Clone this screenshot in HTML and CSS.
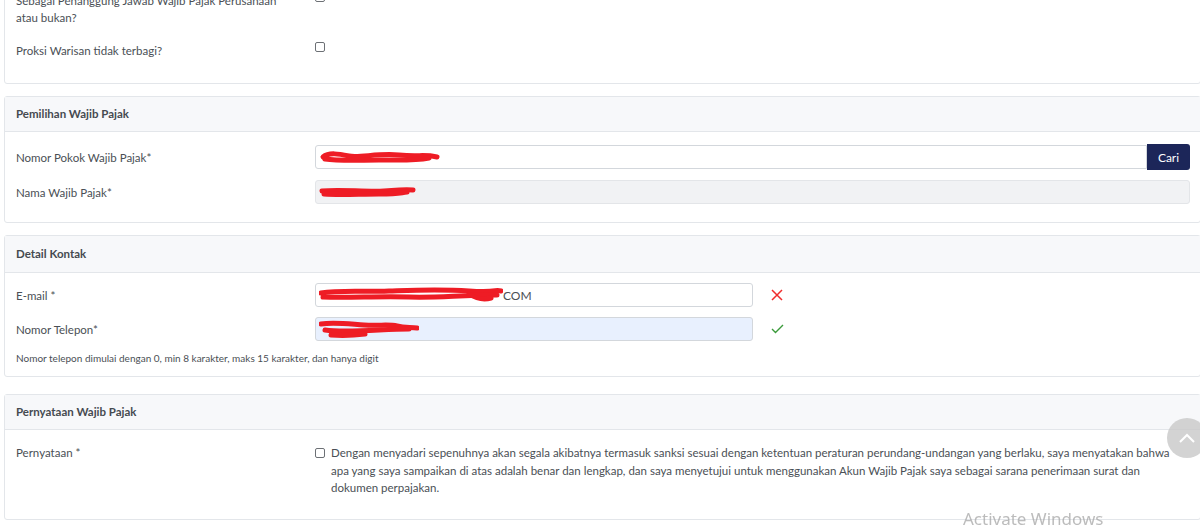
FILE: index.html
```html
<!DOCTYPE html>
<html lang="id">
<head>
  <meta charset="UTF-8">
  <meta name="viewport" content="width=device-width, initial-scale=1.0">
  <title>Registrasi Wajib Pajak</title>
  <link rel="stylesheet" href="styles.css">
</head>
<body>

  <div class="page">

    <!-- Pilihan peran -->
    <div class="card card-top">
      <div class="card-body">
        <div class="form-row row-top">
          <label class="form-label">Sebagai Penanggung Jawab Wajib Pajak Perusahaan atau bukan?</label>
          <div class="form-field"><input type="checkbox" class="check"></div>
        </div>
        <div class="form-row row-top">
          <label class="form-label">Proksi Warisan tidak terbagi?</label>
          <div class="form-field"><input type="checkbox" class="check"></div>
        </div>
      </div>
    </div>

    <!-- Pemilihan Wajib Pajak -->
    <div class="card">
      <div class="card-header">Pemilihan Wajib Pajak</div>
      <div class="card-body">
        <div class="form-row">
          <label class="form-label">Nomor Pokok Wajib Pajak*</label>
          <div class="form-field input-group">
            <div class="form-control">
              <svg class="scribble" width="125" height="18" viewBox="0 0 125 18">
                <path d="M4 9 C10 4, 20 6, 30 8 S60 5, 80 7 S105 6, 118 9" />
                <path d="M6 11 C20 13, 40 12, 60 12 S95 13, 110 10" />
              </svg>
            </div>
            <button class="btn-cari">Cari</button>
          </div>
        </div>
        <div class="form-row">
          <label class="form-label">Nama Wajib Pajak*</label>
          <div class="form-field">
            <div class="form-control disabled">
              <svg class="scribble" width="100" height="18" viewBox="0 0 100 18">
                <path d="M3 8 C20 6, 45 9, 65 8 S85 6, 94 7" />
                <path d="M5 11 C20 12, 40 11, 60 11 S80 10, 88 9" />
              </svg>
            </div>
          </div>
        </div>
      </div>
    </div>

    <!-- Detail Kontak -->
    <div class="card card-kontak">
      <div class="card-header">Detail Kontak</div>
      <div class="card-body">
        <div class="form-row">
          <label class="form-label">E-mail *</label>
          <div class="form-field with-status">
            <div class="form-control short">
              <svg class="scribble" width="184" height="20" viewBox="0 0 184 20">
                <path d="M2 8 C20 5, 40 7, 70 6 S120 4, 150 6 S175 4, 182 6" />
                <path d="M4 12 C30 13, 60 11, 90 12 S140 10, 178 10" />
                <path d="M150 9 C158 14, 165 15, 172 13" />
              </svg><span class="value">COM</span>
            </div>
            <span class="status status-bad">
              <svg width="12" height="12" viewBox="0 0 12 12"><path d="M1 1 L11 11 M11 1 L1 11" /></svg>
            </span>
          </div>
        </div>
        <div class="form-row">
          <label class="form-label">Nomor Telepon*</label>
          <div class="form-field with-status">
            <div class="form-control short autofill">
              <svg class="scribble" width="100" height="22" viewBox="0 0 100 22">
                <path d="M2 6 C15 4, 30 6, 45 7 S70 6, 78 8 S92 9, 98 10" />
                <path d="M6 12 C20 14, 40 13, 60 12 S80 11, 90 11" />
                <path d="M12 17 C25 18, 38 17, 46 16" />
              </svg>
            </div>
            <span class="status status-ok">
              <svg width="13" height="10" viewBox="0 0 13 10"><path d="M1 5 L4.5 8.5 L12 1" /></svg>
            </span>
          </div>
        </div>
        <p class="form-hint">Nomor telepon dimulai dengan 0, min 8 karakter, maks 15 karakter, dan hanya digit</p>
      </div>
    </div>

    <!-- Pernyataan -->
    <div class="card card-statement">
      <div class="card-header">Pernyataan Wajib Pajak</div>
      <div class="card-body">
        <div class="form-row row-top">
          <label class="form-label">Pernyataan *</label>
          <div class="form-field statement">
            <input type="checkbox" class="check">
            <p>Dengan menyadari sepenuhnya akan segala akibatnya termasuk sanksi sesuai dengan ketentuan peraturan perundang-undangan yang berlaku, saya menyatakan bahwa apa yang saya sampaikan di atas adalah benar dan lengkap, dan saya menyetujui untuk menggunakan Akun Wajib Pajak saya sebagai sarana penerimaan surat dan dokumen perpajakan.</p>
          </div>
        </div>
      </div>
    </div>

  </div>

  <button class="scroll-top">
    <svg width="16" height="10" viewBox="0 0 16 10"><path d="M1 9 L8 2 L15 9" /></svg>
  </button>

  <div class="watermark">Activate Windows</div>

</body>
</html>
```

FILE: styles.css
```css
body {
  font-family: Lato, "Noto Sans", sans-serif;
  font-size: 11.5px;
  color: #4a4f55;
  background-color: #fff;
  margin: 0;
  padding: 0;
  overflow: hidden;
}

.page {
  width: 1197px;
  margin-top: -25px;
  padding-left: 4px;
}

.card {
  border: 1px solid #e3e6ea;
  border-radius: 3px;
  background-color: #fff;
  margin-bottom: 12px;
}

.card-kontak {
  margin-bottom: 17px;
}

.card-header {
  background-color: #f7f8fa;
  border-bottom: 1px solid #e3e6ea;
  height: 34px;
  line-height: 34px;
  padding: 0 11px;
  font-weight: 700;
  color: #454a50;
}

.card-kontak .card-header {
  height: 36px;
  line-height: 36px;
}

.card-body {
  padding: 12px 10px 18px 11px;
  display: flex;
  flex-direction: column;
  gap: 10px;
}

.card-kontak .card-body {
  padding-top: 10px;
  padding-bottom: 11px;
}

.card-statement .card-body {
  padding-top: 14px;
  padding-bottom: 22px;
}

.card-top .card-body {
  padding-top: 16px;
  padding-bottom: 24px;
  gap: 16px;
}

.form-row {
  display: grid;
  grid-template-columns: 286px 1fr;
  column-gap: 13px;
  align-items: center;
}

.row-top {
  align-items: start;
}

.form-label {
  line-height: 17px;
  max-width: 268px;
}

.form-field {
  display: flex;
  align-items: center;
}

.input-group .form-control {
  flex: 1;
  border-radius: 3px 0 0 3px;
}

.form-control {
  height: 22px;
  border: 1px solid #d3d7dc;
  border-radius: 3px;
  background-color: #fff;
  display: flex;
  align-items: center;
  flex: 1;
  padding: 0 3px;
  overflow: hidden;
}

.form-control.disabled {
  background-color: #f1f2f4;
  border-color: #e3e5e8;
}

.form-control.short {
  flex: 0 0 430px;
}

.form-control.autofill {
  background-color: #e8f0fe;
}

.form-control .value {
  color: #4a4f55;
  font-size: 12px;
}

.scribble {
  flex: none;
}

.scribble path {
  fill: none;
  stroke: #ee1c25;
  stroke-width: 5;
  stroke-linecap: round;
}

.btn-cari {
  height: 26px;
  width: 43px;
  border: none;
  border-radius: 0 3px 3px 0;
  background-color: #1c2659;
  color: #fff;
  font-family: inherit;
  font-size: 12px;
}

.with-status {
  gap: 17px;
}

.status {
  width: 14px;
  display: flex;
  justify-content: center;
}

.status-bad svg path {
  fill: none;
  stroke: #f02d2d;
  stroke-width: 1.5;
}

.status-ok svg path {
  fill: none;
  stroke: #3a9a3a;
  stroke-width: 1.4;
}

.form-hint {
  margin: 0;
  font-size: 10px;
  line-height: 14px;
}

.check {
  appearance: none;
  width: 10px;
  height: 10px;
  margin: 0;
  border: 1px solid #6c7075;
  border-radius: 2px;
  background: #fff;
}

.row-top .form-field {
  align-items: flex-start;
  padding-top: 4px;
}

.statement .check {
  flex: none;
  margin-top: 0;
}

.statement p {
  margin: -4px 0 0 6px;
  line-height: 17.5px;
}

.card-top .row-top .form-field {
  padding-top: 0;
}

.scroll-top {
  position: fixed;
  left: 1167px;
  top: 418px;
  width: 40px;
  height: 40px;
  border: none;
  border-radius: 50%;
  background-color: rgba(200, 200, 200, 0.8);
  padding: 0;
  display: flex;
  align-items: center;
  justify-content: center;
}

.scroll-top svg path {
  fill: none;
  stroke: #fff;
  stroke-width: 2;
}

.watermark {
  position: fixed;
  left: 963px;
  top: 507px;
  font-family: "Noto Sans", sans-serif;
  font-size: 17px;
  color: rgba(160, 160, 160, 0.7);
}
```
